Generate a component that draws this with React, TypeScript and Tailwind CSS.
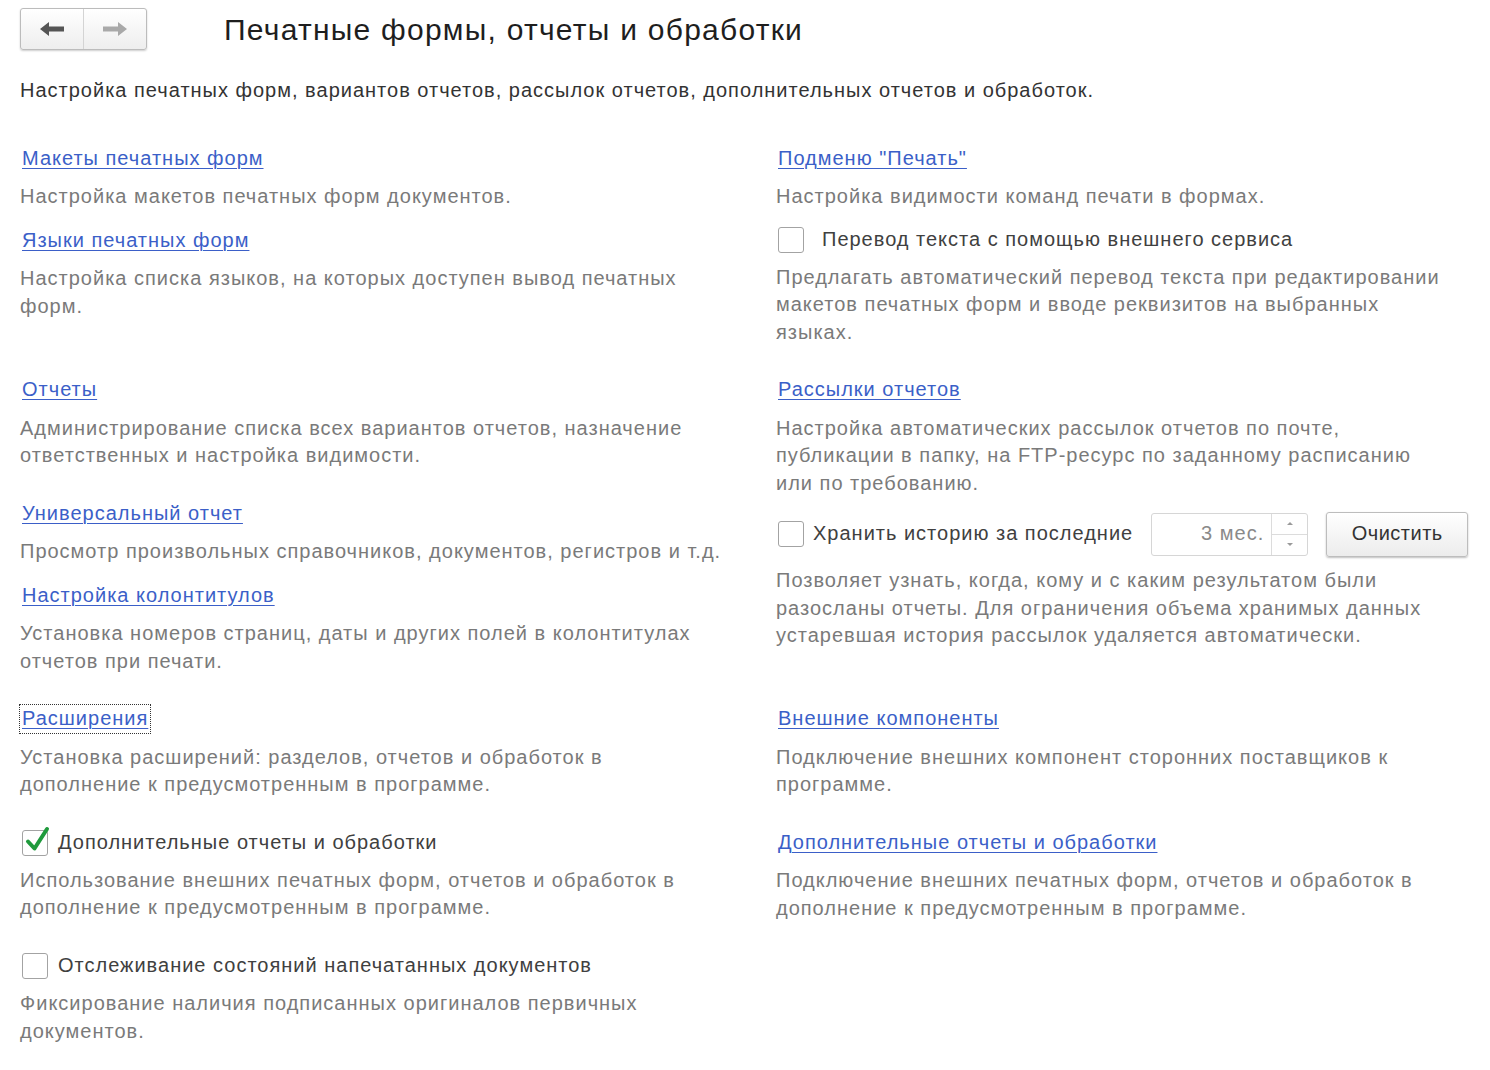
import React from "react";

type Item =
  | { kind: "link"; title: string; desc: string[]; focused?: boolean; gap?: boolean }
  | { kind: "check"; title: string; desc: string[]; checked?: boolean; wide?: boolean }
  | { kind: "history"; desc: string[] };

const Checkbox = ({ checked }: { checked?: boolean }) => (
  <span className="relative ml-[2px] inline-block w-[26px] h-[26px] shrink-0 rounded-[3px] border border-[#a3a3a3] bg-white">
    {checked && (
      <svg
        className="absolute left-[2px] top-[-5px]"
        width="26"
        height="28"
        viewBox="0 0 26 28"
        fill="none">
        <path
          d="M3 15.5 L9.5 22.5 L22 3"
          stroke="#1f9a3c"
          strokeWidth="4"
          strokeLinecap="round"
          strokeLinejoin="round"
        />
      </svg>
    )}
  </span>
);

const Lines = ({ lines }: { lines: string[] }) => (
  <>
    {lines.map((l, i) => (
      <span key={i} className="block">
        {l}
      </span>
    ))}
  </>
);

const HistoryRow = () => (
  <div className="flex items-center h-[44px]">
    <Checkbox />
    <span className="ml-[9px] text-[#404040]">Хранить историю за последние</span>
    <div className="ml-[18px] flex h-[43px] w-[157px] rounded-[3px] border border-[#d6d6d6] bg-white">
      <span className="flex-1 flex items-center justify-end pr-[7px] text-[#8a8a8a]">3 мес.</span>
      <div className="flex w-[36px] flex-col border-l border-[#dcdcdc]">
        <span className="flex flex-1 items-center justify-center border-b border-[#dcdcdc]">
          <span className="block h-0 w-0 border-x-[3px] border-b-[3px] border-x-transparent border-b-[#9a9a9a]" />
        </span>
        <span className="flex flex-1 items-center justify-center">
          <span className="block h-0 w-0 border-x-[3px] border-t-[3px] border-x-transparent border-t-[#9a9a9a]" />
        </span>
      </div>
    </div>
    <button className="ml-[18px] h-[45px] w-[142px] rounded-[3px] border border-[#bdbdbd] bg-gradient-to-b from-white to-[#ececec] text-[#333] tracking-[0.5px] shadow-[0_1px_2px_rgba(0,0,0,0.25)]">
      Очистить
    </button>
  </div>
);

const Entry = ({ item }: { item: Item }) => {
  if (item.kind === "history") {
    return (
      <div className="mt-[15px]">
        <HistoryRow />
        <p className="mt-[11px] text-[#7a7a7a]">
          <Lines lines={item.desc} />
        </p>
      </div>
    );
  }
  if (item.kind === "check") {
    return (
      <div className="mt-[15px] first:mt-0">
        <label className="flex items-center h-[28px]">
          <Checkbox checked={item.checked} />
          <span className={(item.wide ? "ml-[18px]" : "ml-[10px]") + " text-[#404040]"}>
            {item.title}
          </span>
        </label>
        <p className="mt-[10px] text-[#7a7a7a]">
          <Lines lines={item.desc} />
        </p>
      </div>
    );
  }
  return (
    <div className={(item.gap ? "mt-[30px]" : "mt-[16px]") + " first:mt-0"}>
      <a
        href="#"
        className={
          "inline-block pl-[2px] pr-[2px] text-[#3b5fc8] underline underline-offset-[3px] decoration-1" +
          (item.focused ? " outline outline-1 outline-dotted outline-[#333] outline-offset-[0px]" : "")
        }>
        {item.title}
      </a>
      <p className="mt-[11px] text-[#7a7a7a]">
        <Lines lines={item.desc} />
      </p>
    </div>
  );
};

const rows: [Item[], Item[]][] = [
  [
    [
      { kind: "link", title: "Макеты печатных форм", desc: ["Настройка макетов печатных форм документов."] },
      {
        kind: "link",
        title: "Языки печатных форм",
        desc: ["Настройка списка языков, на которых доступен вывод печатных", "форм."],
      },
    ],
    [
      { kind: "link", title: "Подменю \"Печать\"", desc: ["Настройка видимости команд печати в формах."] },
      {
        kind: "check",
        wide: true,
        title: "Перевод текста с помощью внешнего сервиса",
        desc: [
          "Предлагать автоматический перевод текста при редактировании",
          "макетов печатных форм и вводе реквизитов на выбранных",
          "языках.",
        ],
      },
    ],
  ],
  [
    [
      {
        kind: "link",
        title: "Отчеты",
        desc: [
          "Администрирование списка всех вариантов отчетов, назначение",
          "ответственных и настройка видимости.",
        ],
      },
      {
        kind: "link",
        title: "Универсальный отчет",
        gap: true,
        desc: ["Просмотр произвольных справочников, документов, регистров и т.д."],
      },
      {
        kind: "link",
        title: "Настройка колонтитулов",
        desc: ["Установка номеров страниц, даты и других полей в колонтитулах", "отчетов при печати."],
      },
    ],
    [
      {
        kind: "link",
        title: "Рассылки отчетов",
        desc: [
          "Настройка автоматических рассылок отчетов по почте,",
          "публикации в папку, на FTP-ресурс по заданному расписанию",
          "или по требованию.",
        ],
      },
      {
        kind: "history",
        desc: [
          "Позволяет узнать, когда, кому и с каким результатом были",
          "разосланы отчеты. Для ограничения объема хранимых данных",
          "устаревшая история рассылок удаляется автоматически.",
        ],
      },
    ],
  ],
  [
    [
      {
        kind: "link",
        title: "Расширения",
        focused: true,
        desc: ["Установка расширений: разделов, отчетов и обработок в", "дополнение к предусмотренным в программе."],
      },
    ],
    [
      {
        kind: "link",
        title: "Внешние компоненты",
        desc: ["Подключение внешних компонент сторонних поставщиков к", "программе."],
      },
    ],
  ],
  [
    [
      {
        kind: "check",
        checked: true,
        title: "Дополнительные отчеты и обработки",
        desc: ["Использование внешних печатных форм, отчетов и обработок в", "дополнение к предусмотренным в программе."],
      },
    ],
    [
      {
        kind: "link",
        title: "Дополнительные отчеты и обработки",
        desc: ["Подключение внешних печатных форм, отчетов и обработок в", "дополнение к предусмотренным в программе."],
      },
    ],
  ],
  [
    [
      {
        kind: "check",
        title: "Отслеживание состояний напечатанных документов",
        desc: ["Фиксирование наличия подписанных оригиналов первичных", "документов."],
      },
    ],
    [],
  ],
];

const NavButtons = () => (
  <div className="flex h-[42px] w-[127px] rounded-[3px] border border-[#bcbcbc] bg-gradient-to-b from-white to-[#eeeeee] shadow-[0_1px_2px_rgba(0,0,0,0.2)]">
    <button className="flex flex-1 items-center justify-center border-r border-[#d4d4d4]">
      <svg width="26" height="16" viewBox="0 0 26 16">
        <path d="M1 8 L10 1 V5.5 H25 V10.5 H10 V15 Z" fill="#555" />
      </svg>
    </button>
    <button className="flex flex-1 items-center justify-center">
      <svg width="26" height="16" viewBox="0 0 26 16">
        <path d="M25 8 L16 1 V5.5 H1 V10.5 H16 V15 Z" fill="#a9a9a9" />
      </svg>
    </button>
  </div>
);

export default function App() {
  return (
    <div className="min-h-screen bg-white px-5 pt-2 pb-8 font-['Liberation_Sans',Arial,sans-serif] text-[20px] leading-[27.5px] tracking-[1px] text-[#404040]">
      <header className="flex items-center h-[42px]">
        <NavButtons />
        <h1 className="ml-[77px] mt-[2px] text-[30px] leading-[36px] tracking-[1.25px] text-[#1e1e1e]">
          Печатные формы, отчеты и обработки
        </h1>
      </header>
      <p className="mt-[27px] text-[#333]">
        Настройка печатных форм, вариантов отчетов, рассылок отчетов, дополнительных отчетов и обработок.
      </p>
      <div className="mt-[40px] grid grid-cols-[756px_1fr] gap-y-[30px]">
        {rows.map(([left, right], i) => (
          <React.Fragment key={i}>
            <div>
              {left.map((it, j) => (
                <Entry key={j} item={it} />
              ))}
            </div>
            <div>
              {right.map((it, j) => (
                <Entry key={j} item={it} />
              ))}
            </div>
          </React.Fragment>
        ))}
      </div>
    </div>
  );
}
